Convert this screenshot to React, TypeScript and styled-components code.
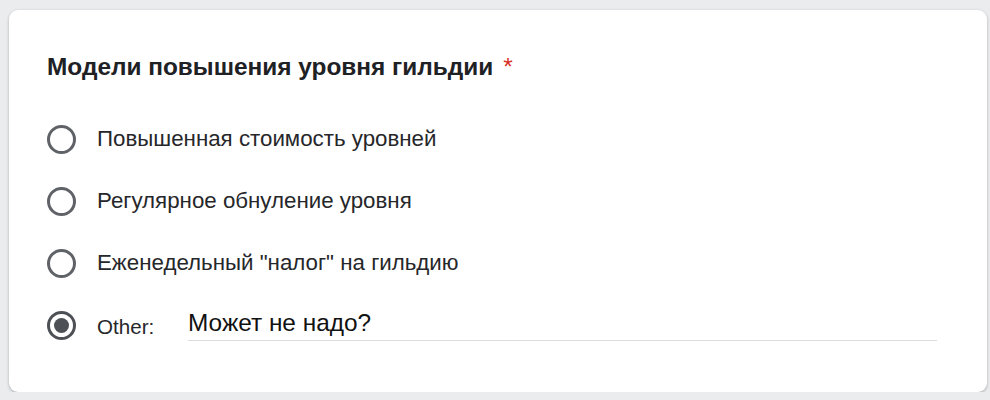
import styled, { createGlobalStyle } from "styled-components";

const GlobalStyle = createGlobalStyle`
  html, body {
    margin: 0;
    padding: 0;
    background: #ebecee;
    font-family: "Liberation Sans", Arial, sans-serif;
  }
`;

const Page = styled.div`
  padding: 10px 3px 0 9px;
`;

const Card = styled.div`
  box-sizing: border-box;
  height: 382px;
  background: #fff;
  border-radius: 9px;
  box-shadow: 0 1px 2px rgba(60, 64, 67, 0.25), 0 1px 3px 1px rgba(60, 64, 67, 0.1);
  padding: 42px 50px 0 38px;
`;

const Title = styled.div`
  font-size: 24.4px;
  font-weight: bold;
  color: #202124;
  line-height: 30px;
  margin-bottom: 40px;
`;

const Required = styled.span`
  color: #d93025;
  font-weight: normal;
  margin-left: 10px;
`;

const Options = styled.div`
  display: flex;
  flex-direction: column;
  gap: 28px;
`;

const Option = styled.label`
  display: flex;
  align-items: center;
  height: 34px;
`;

const Radio = styled.span<{ $checked?: boolean }>`
  box-sizing: border-box;
  flex: none;
  width: 29px;
  height: 29px;
  border-radius: 50%;
  border: 3px solid ${(p) => (p.$checked ? "#4d5156" : "#5f6368")};
  display: flex;
  align-items: center;
  justify-content: center;
  margin-right: 21px;

  &::after {
    content: "";
    display: ${(p) => (p.$checked ? "block" : "none")};
    width: 15px;
    height: 15px;
    border-radius: 50%;
    background: #4d5156;
  }
`;

const OptionText = styled.span`
  font-size: 22.3px;
  color: #26272a;
`;

const OtherLabel = styled.span`
  font-size: 20.6px;
  color: #26272a;
  width: 91px;
  flex: none;
  padding-top: 4px;
`;

const OtherInput = styled.div`
  flex: 1;
  font-size: 24.4px;
  color: #111;
  border-bottom: 1px solid #dadce0;
  padding-bottom: 3px;
`;

const choices = [
  "Повышенная стоимость уровней",
  "Регулярное обнуление уровня",
  'Еженедельный "налог" на гильдию',
];

export default function App() {
  return (
    <>
      <GlobalStyle />
      <Page>
        <Card>
          <Title>
            Модели повышения уровня гильдии<Required>*</Required>
          </Title>
          <Options>
            {choices.map((c) => (
              <Option key={c}>
                <Radio />
                <OptionText>{c}</OptionText>
              </Option>
            ))}
            <Option>
              <Radio $checked />
              <OtherLabel>Other:</OtherLabel>
              <OtherInput>Может не надо?</OtherInput>
            </Option>
          </Options>
        </Card>
      </Page>
    </>
  );
}
